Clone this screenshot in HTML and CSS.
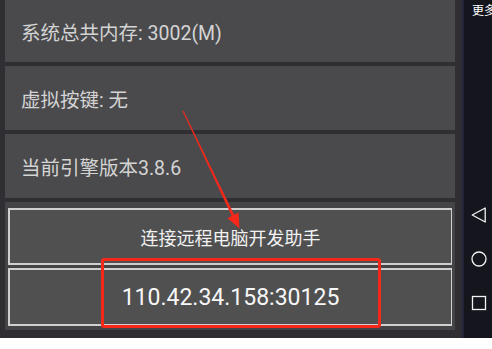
FILE: index.html
```html
<!DOCTYPE html>
<html>
<head>
<meta charset="utf-8">
<link rel="stylesheet" href="styles.css">
</head>
<body>
<div class="screen">
  <div class="main">
    <div class="card first"><span>系统总共内存: 3002(M)</span></div>
    <div class="card"><span>虚拟按键: 无</span></div>
    <div class="card"><span>当前引擎版本3.8.6</span></div>
    <div class="panel">
      <div class="btn btn-connect">连接远程电脑开发助手</div>
      <div class="btn btn-ip">110.42.34.158:30125</div>
    </div>
  </div>
  <div class="nav">
    <div class="more">更多</div>
    <div class="nav-icons">
      <svg class="nav-icon" width="16" height="16" viewBox="0 0 16 16"><path d="M1.2 8 L14.2 1 L14.2 15 Z" fill="none" stroke="#f2f2f2" stroke-width="1.3" stroke-linejoin="round"/></svg>
      <svg class="nav-icon" width="16" height="16" viewBox="0 0 16 16"><circle cx="8" cy="8" r="7" fill="none" stroke="#f2f2f2" stroke-width="1.3"/></svg>
      <svg class="nav-icon" width="16" height="16" viewBox="0 0 16 16"><rect x="1.5" y="1.5" width="13" height="13" fill="none" stroke="#f2f2f2" stroke-width="1.3"/></svg>
    </div>
  </div>
</div>
<div class="footer"></div>
<div class="highlight"></div>
<svg class="arrow" width="492" height="349" viewBox="0 0 492 349">
  <polygon points="183.5,110.8 234.2,214.7 238.6,212.6 239.5,228.5 227.4,218.2 231.7,216.1 182.6,111.2" fill="#f5281a"/>
</svg>
</body>
</html>
```
FILE: styles.css
```css
html, body {
  margin: 0;
  padding: 0;
}
body {
  width: 492px;
  height: 349px;
  background: #ffffff;
  font-family: "Roboto", "Noto Sans CJK SC", sans-serif;
  position: relative;
  overflow: hidden;
}
.screen {
  display: flex;
  height: 338px;
}
.main {
  width: 462px;
  background: #2f2f33;
  padding: 0 7px 0 5px;
  box-sizing: border-box;
  display: flex;
  flex-direction: column;
  gap: 4px;
}
.card {
  height: 64px;
  background: #4a4a4c;
  display: flex;
  align-items: center;
  padding-left: 16px;
  color: #d4d4d4;
  font-size: 19.5px;
  flex-shrink: 0;
}
.card.first {
  height: 62px;
  margin-top: 0;
}
.panel {
  height: 128px;
  background: #444447;
  padding: 6px 3px 4px 3px;
  box-sizing: border-box;
  display: flex;
  flex-direction: column;
  gap: 3px;
}
.btn {
  background: #505051;
  border: 2px solid #cfcfcf;
  border-right-width: 1.5px;
  display: flex;
  align-items: center;
  justify-content: center;
  color: #f2f2f2;
  box-sizing: border-box;
}
.btn-connect {
  height: 57px;
  font-size: 18px;
}
.btn-ip {
  height: 58px;
  font-size: 23px;
  color: #f7f7f7;
}
.nav {
  width: 30px;
  background: #15151d;
  border-left: 2px solid #23233a;
  box-sizing: border-box;
  position: relative;
  overflow: hidden;
}
.more {
  position: absolute;
  left: 8px;
  top: 1px;
  font-size: 12px;
  color: #ffffff;
  white-space: nowrap;
  font-family: "Noto Sans CJK SC", sans-serif;
}
.nav-icons {
  display: flex;
  flex-direction: column;
  align-items: center;
  padding-top: 207px;
  gap: 28px;
  padding-left: 2px;
}
.nav-icon {
  display: block;
}
.footer {
  height: 11px;
  background: #ffffff;
}
.highlight {
  position: absolute;
  left: 101px;
  top: 258px;
  width: 280px;
  height: 70px;
  border: 3px solid #f5281a;
  border-radius: 3px;
  box-sizing: border-box;
}
.arrow {
  position: absolute;
  left: 0;
  top: 0;
  pointer-events: none;
}
```
